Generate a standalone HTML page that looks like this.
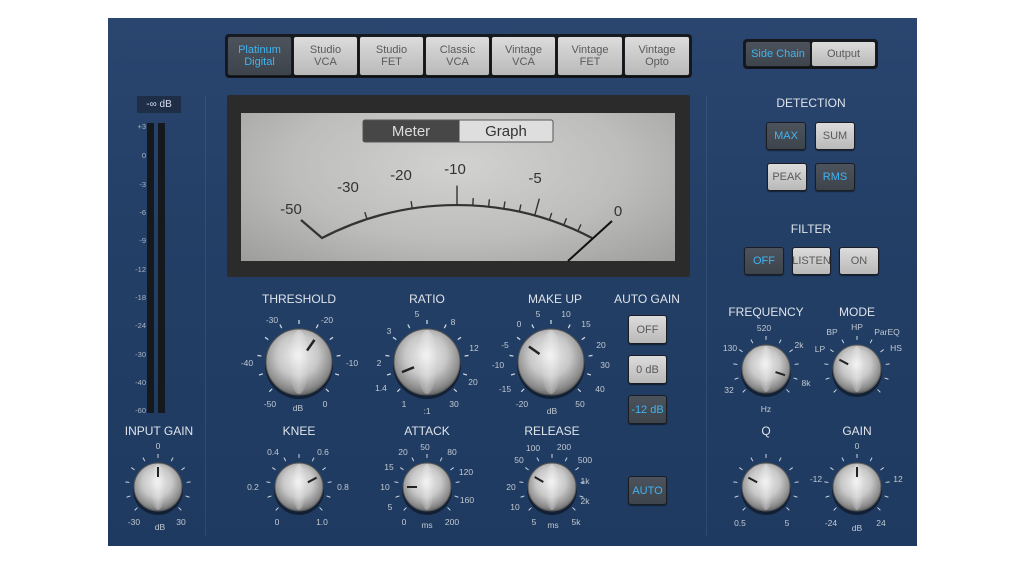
<!DOCTYPE html>
<html><head><meta charset="utf-8"><style>
*{margin:0;padding:0;box-sizing:border-box}
body{width:1024px;height:565px;background:#fff;position:relative;overflow:hidden;font-family:"Liberation Sans",sans-serif}
#panel{position:absolute;left:108px;top:18px;width:809px;height:528px;background:linear-gradient(180deg,#2a4670 0%,#233f66 40%,#1f3a60 100%)}
.b{position:absolute;border:1px solid #1a1d22;border-radius:3px;background:linear-gradient(#dcdcdc,#b9b9b9);color:#5a5a5a;font-size:11px;text-align:center;display:flex;align-items:center;justify-content:center;line-height:12px;box-shadow:0 1px 1px rgba(0,0,0,.5)}
.on{background:linear-gradient(#4c535c,#3e444c);color:#3fb4f2}
.vl{position:absolute;width:1px;background:rgba(255,255,255,.08)}
.kt{fill:none;stroke:#d0d7e0;stroke-width:4;stroke-dasharray:1.8 25.2 1.8 25.2 1.8 25.2 1.8 25.2 1.8 25.2 1.8 25.2 1.8 25.2 1.8 25.2 1.8 25.2 1.8 25.2 1.8 88.2}
text{font-family:"Liberation Sans",sans-serif}
.lb{fill:#dfe4ea;font-size:12px;text-anchor:middle}
.sc{fill:#c2c9d2;font-size:8.5px;text-anchor:middle}
</style></head><body>
<div id="panel"></div>
<div class="vl" style="left:205px;top:96px;height:440px"></div>
<div class="vl" style="left:706px;top:96px;height:440px"></div>
<div style="position:absolute;left:225px;top:34px;width:467px;height:44px;background:#16191e;border-radius:4px"></div>
<div class="b on" style="left:227px;top:36px;width:65px;height:40px">Platinum<br>Digital</div>
<div class="b" style="left:293px;top:36px;width:65px;height:40px">Studio<br>VCA</div>
<div class="b" style="left:359px;top:36px;width:65px;height:40px">Studio<br>FET</div>
<div class="b" style="left:425px;top:36px;width:65px;height:40px">Classic<br>VCA</div>
<div class="b" style="left:491px;top:36px;width:65px;height:40px">Vintage<br>VCA</div>
<div class="b" style="left:557px;top:36px;width:66px;height:40px">Vintage<br>FET</div>
<div class="b" style="left:624px;top:36px;width:66px;height:40px">Vintage<br>Opto</div>
<div style="position:absolute;left:743px;top:39px;width:135px;height:30px;background:#16191e;border-radius:4px"></div>
<div class="b on" style="left:745px;top:41px;width:66px;height:26px">Side Chain</div>
<div class="b" style="left:811px;top:41px;width:65px;height:26px">Output</div>
<div class="b on" style="left:766px;top:122px;width:40px;height:28px">MAX</div>
<div class="b" style="left:815px;top:122px;width:40px;height:28px">SUM</div>
<div class="b" style="left:767px;top:163px;width:40px;height:28px">PEAK</div>
<div class="b on" style="left:815px;top:163px;width:40px;height:28px">RMS</div>
<div class="b on" style="left:744px;top:247px;width:40px;height:28px">OFF</div>
<div class="b" style="left:792px;top:247px;width:39px;height:28px">LISTEN</div>
<div class="b" style="left:839px;top:247px;width:40px;height:28px">ON</div>
<div class="b" style="left:628px;top:315px;width:39px;height:29px">OFF</div>
<div class="b" style="left:628px;top:355px;width:39px;height:29px">0 dB</div>
<div class="b on" style="left:628px;top:395px;width:39px;height:29px">-12 dB</div>
<div class="b on" style="left:628px;top:476px;width:39px;height:29px">AUTO</div>
<div style="position:absolute;left:227px;top:95px;width:463px;height:182px;background:#2b2b2c;border-radius:2px"></div>
<div style="position:absolute;left:241px;top:113px;width:434px;height:148px;background:radial-gradient(ellipse at 50% 35%,#d2d2d0 0%,#bdbdbb 55%,#9d9d9b 100%)"></div>
<div style="position:absolute;left:137px;top:96px;width:44px;height:17px;background:#1d2e46;color:#dde;font-size:10px;text-align:center;line-height:17px">-∞ dB</div>
<div style="position:absolute;left:147px;top:123px;width:7px;height:290px;background:#15181c"></div>
<div style="position:absolute;left:158px;top:123px;width:7px;height:290px;background:#15181c"></div>
<svg width="1024" height="565" style="position:absolute;left:0;top:0">
<defs>
<radialGradient id="sil" cx="48%" cy="40%" r="62%"><stop offset="0" stop-color="#eeeeee"/><stop offset=".5" stop-color="#c8c8c8"/><stop offset=".85" stop-color="#8a8a8a"/><stop offset="1" stop-color="#5e5e5e"/></radialGradient>
<linearGradient id="sh" x1="0" y1="0" x2="1" y2="0"><stop offset="0" stop-color="#fff" stop-opacity="0"/><stop offset=".5" stop-color="#fff" stop-opacity=".3"/><stop offset="1" stop-color="#fff" stop-opacity="0"/></linearGradient>
</defs>
<rect x="363" y="120" width="190" height="22" rx="2" fill="#dedede" stroke="#555"/>
<rect x="363.5" y="120.5" width="96" height="21" fill="#474747"/>
<text x="411" y="136" font-size="15" fill="#ddd" text-anchor="middle">Meter</text>
<text x="506" y="136" font-size="15" fill="#333" text-anchor="middle">Graph</text>
<path d="M301 220 L322 238 A293 293 0 0 1 592 238" fill="none" stroke="#333" stroke-width="2.2"/>
<g stroke="#333" stroke-width="1.4" transform="translate(457,497.6)">
<line x1="0" y1="-293" x2="0" y2="-312"/>
<line x1="0" y1="-293" x2="0" y2="-310" transform="rotate(15.4)"/>
<line x1="0" y1="-293" x2="0" y2="-300" transform="rotate(-8.8)"/>
<line x1="0" y1="-293" x2="0" y2="-300" transform="rotate(-17.9)"/>
<line x1="0" y1="-293" x2="0" y2="-300" transform="rotate(3.1)"/>
<line x1="0" y1="-293" x2="0" y2="-300" transform="rotate(6.2)"/>
<line x1="0" y1="-293" x2="0" y2="-300" transform="rotate(9.2)"/>
<line x1="0" y1="-293" x2="0" y2="-300" transform="rotate(12.3)"/>
<line x1="0" y1="-293" x2="0" y2="-300" transform="rotate(18.4)"/>
<line x1="0" y1="-293" x2="0" y2="-300" transform="rotate(21.4)"/>
<line x1="0" y1="-293" x2="0" y2="-300" transform="rotate(24.4)"/>
</g>
<g font-size="15" fill="#333" text-anchor="middle">
<text x="291" y="214">-50</text><text x="348" y="192">-30</text><text x="401" y="180">-20</text><text x="455" y="174">-10</text><text x="535" y="183">-5</text><text x="618" y="216">0</text>
</g>
<line x1="568" y1="261" x2="612" y2="221" stroke="#111" stroke-width="2"/>
<g font-size="7.5" fill="#a9b4c4" text-anchor="end">
<text x="146" y="129">+3</text><text x="146" y="158">0</text><text x="146" y="187">-3</text><text x="146" y="215">-6</text><text x="146" y="243">-9</text><text x="146" y="272">-12</text><text x="146" y="300">-18</text><text x="146" y="328">-24</text><text x="146" y="357">-30</text><text x="146" y="385">-40</text><text x="146" y="413">-60</text>
</g>
<g>
<text class="lb" x="299" y="303">THRESHOLD</text><text class="lb" x="427" y="303">RATIO</text><text class="lb" x="555" y="303">MAKE UP</text><text class="lb" x="647" y="303">AUTO GAIN</text>
<text class="lb" x="299" y="435">KNEE</text><text class="lb" x="427" y="435">ATTACK</text><text class="lb" x="552" y="435">RELEASE</text><text class="lb" x="159" y="435">INPUT GAIN</text>
<text class="lb" x="811" y="107">DETECTION</text><text class="lb" x="811" y="233">FILTER</text>
<text class="lb" x="766" y="316">FREQUENCY</text><text class="lb" x="857" y="316">MODE</text>
<text class="lb" x="766" y="435">Q</text><text class="lb" x="857" y="435">GAIN</text>
</g>
<g>
<text class="sc" x="272" y="323">-30</text><text class="sc" x="327" y="323">-20</text><text class="sc" x="247" y="366">-40</text><text class="sc" x="352" y="366">-10</text><text class="sc" x="270" y="407">-50</text><text class="sc" x="298" y="411">dB</text><text class="sc" x="325" y="407">0</text>
<text class="sc" x="417" y="317">5</text><text class="sc" x="453" y="325">8</text><text class="sc" x="389" y="334">3</text><text class="sc" x="474" y="351">12</text><text class="sc" x="379" y="366">2</text><text class="sc" x="473" y="385">20</text><text class="sc" x="381" y="391">1.4</text><text class="sc" x="404" y="407">1</text><text class="sc" x="427" y="414">:1</text><text class="sc" x="454" y="407">30</text>
<text class="sc" x="538" y="317">5</text><text class="sc" x="566" y="317">10</text><text class="sc" x="519" y="327">0</text><text class="sc" x="586" y="327">15</text><text class="sc" x="505" y="348">-5</text><text class="sc" x="601" y="348">20</text><text class="sc" x="498" y="368">-10</text><text class="sc" x="605" y="368">30</text><text class="sc" x="505" y="392">-15</text><text class="sc" x="600" y="392">40</text><text class="sc" x="522" y="407">-20</text><text class="sc" x="552" y="414">dB</text><text class="sc" x="580" y="407">50</text>
<text class="sc" x="273" y="455">0.4</text><text class="sc" x="323" y="455">0.6</text><text class="sc" x="253" y="490">0.2</text><text class="sc" x="343" y="490">0.8</text><text class="sc" x="277" y="525">0</text><text class="sc" x="322" y="525">1.0</text>
<text class="sc" x="403" y="455">20</text><text class="sc" x="425" y="450">50</text><text class="sc" x="452" y="455">80</text><text class="sc" x="389" y="470">15</text><text class="sc" x="466" y="475">120</text><text class="sc" x="385" y="490">10</text><text class="sc" x="467" y="503">160</text><text class="sc" x="390" y="510">5</text><text class="sc" x="404" y="525">0</text><text class="sc" x="427" y="528">ms</text><text class="sc" x="452" y="525">200</text>
<text class="sc" x="533" y="451">100</text><text class="sc" x="564" y="450">200</text><text class="sc" x="519" y="463">50</text><text class="sc" x="585" y="463">500</text><text class="sc" x="511" y="490">20</text><text class="sc" x="585" y="484">1k</text><text class="sc" x="515" y="510">10</text><text class="sc" x="585" y="504">2k</text><text class="sc" x="534" y="525">5</text><text class="sc" x="553" y="528">ms</text><text class="sc" x="576" y="525">5k</text>
<text class="sc" x="158" y="449">0</text><text class="sc" x="134" y="525">-30</text><text class="sc" x="160" y="530">dB</text><text class="sc" x="181" y="525">30</text>
<text class="sc" x="764" y="331">520</text><text class="sc" x="730" y="351">130</text><text class="sc" x="799" y="348">2k</text><text class="sc" x="729" y="393">32</text><text class="sc" x="806" y="386">8k</text><text class="sc" x="766" y="412">Hz</text>
<text class="sc" x="832" y="335">BP</text><text class="sc" x="857" y="330">HP</text><text class="sc" x="887" y="335">ParEQ</text><text class="sc" x="820" y="352">LP</text><text class="sc" x="896" y="351">HS</text>
<text class="sc" x="857" y="449">0</text><text class="sc" x="816" y="482">-12</text><text class="sc" x="898" y="482">12</text><text class="sc" x="740" y="526">0.5</text><text class="sc" x="787" y="526">5</text><text class="sc" x="831" y="526">-24</text><text class="sc" x="857" y="531">dB</text><text class="sc" x="881" y="526">24</text>
</g>
<g transform="translate(299,362)"><circle class="kt" r="40" pathLength="360" transform="rotate(134.1)"/><circle r="34" cy="3" fill="rgba(0,0,0,.45)"/><circle r="33" fill="url(#sil)"/><ellipse rx="10" ry="32" fill="url(#sh)"/><circle r="33" fill="none" stroke="#555"/><line x1="0" y1="-14" x2="0" y2="-27" stroke="#222" stroke-width="2.5" transform="rotate(35)"/></g>
<g transform="translate(427,362)"><circle class="kt" r="40" pathLength="360" transform="rotate(134.1)"/><circle r="34" cy="3" fill="rgba(0,0,0,.45)"/><circle r="33" fill="url(#sil)"/><ellipse rx="10" ry="32" fill="url(#sh)"/><circle r="33" fill="none" stroke="#555"/><line x1="0" y1="-14" x2="0" y2="-27" stroke="#222" stroke-width="2.5" transform="rotate(-112)"/></g>
<g transform="translate(551,362)"><circle class="kt" r="40" pathLength="360" transform="rotate(134.1)"/><circle r="34" cy="3" fill="rgba(0,0,0,.45)"/><circle r="33" fill="url(#sil)"/><ellipse rx="10" ry="32" fill="url(#sh)"/><circle r="33" fill="none" stroke="#555"/><line x1="0" y1="-14" x2="0" y2="-27" stroke="#222" stroke-width="2.5" transform="rotate(-55)"/></g>
<g transform="translate(299,487)"><circle class="kt" r="31" pathLength="360" transform="rotate(134.1)"/><circle r="25" cy="3" fill="rgba(0,0,0,.45)"/><circle r="24" fill="url(#sil)"/><ellipse rx="7" ry="23" fill="url(#sh)"/><circle r="24" fill="none" stroke="#555"/><line x1="0" y1="-10" x2="0" y2="-20" stroke="#222" stroke-width="2" transform="rotate(62)"/></g>
<g transform="translate(427,487)"><circle class="kt" r="31" pathLength="360" transform="rotate(134.1)"/><circle r="25" cy="3" fill="rgba(0,0,0,.45)"/><circle r="24" fill="url(#sil)"/><ellipse rx="7" ry="23" fill="url(#sh)"/><circle r="24" fill="none" stroke="#555"/><line x1="0" y1="-10" x2="0" y2="-20" stroke="#222" stroke-width="2" transform="rotate(-90)"/></g>
<g transform="translate(552,487)"><circle class="kt" r="31" pathLength="360" transform="rotate(134.1)"/><circle r="25" cy="3" fill="rgba(0,0,0,.45)"/><circle r="24" fill="url(#sil)"/><ellipse rx="7" ry="23" fill="url(#sh)"/><circle r="24" fill="none" stroke="#555"/><line x1="0" y1="-10" x2="0" y2="-20" stroke="#222" stroke-width="2" transform="rotate(-60)"/></g>
<g transform="translate(158,487)"><circle class="kt" r="31" pathLength="360" transform="rotate(134.1)"/><circle r="25" cy="3" fill="rgba(0,0,0,.45)"/><circle r="24" fill="url(#sil)"/><ellipse rx="7" ry="23" fill="url(#sh)"/><circle r="24" fill="none" stroke="#555"/><line x1="0" y1="-10" x2="0" y2="-20" stroke="#222" stroke-width="2"/></g>
<g transform="translate(766,369)"><circle class="kt" r="31" pathLength="360" transform="rotate(134.1)"/><circle r="25" cy="3" fill="rgba(0,0,0,.45)"/><circle r="24" fill="url(#sil)"/><ellipse rx="7" ry="23" fill="url(#sh)"/><circle r="24" fill="none" stroke="#555"/><line x1="0" y1="-10" x2="0" y2="-20" stroke="#222" stroke-width="2" transform="rotate(108)"/></g>
<g transform="translate(857,369)"><circle class="kt" r="31" pathLength="360" transform="rotate(134.1)"/><circle r="25" cy="3" fill="rgba(0,0,0,.45)"/><circle r="24" fill="url(#sil)"/><ellipse rx="7" ry="23" fill="url(#sh)"/><circle r="24" fill="none" stroke="#555"/><line x1="0" y1="-10" x2="0" y2="-20" stroke="#222" stroke-width="2" transform="rotate(-62)"/></g>
<g transform="translate(766,487)"><circle class="kt" r="31" pathLength="360" transform="rotate(134.1)"/><circle r="25" cy="3" fill="rgba(0,0,0,.45)"/><circle r="24" fill="url(#sil)"/><ellipse rx="7" ry="23" fill="url(#sh)"/><circle r="24" fill="none" stroke="#555"/><line x1="0" y1="-10" x2="0" y2="-20" stroke="#222" stroke-width="2" transform="rotate(-62)"/></g>
<g transform="translate(857,487)"><circle class="kt" r="31" pathLength="360" transform="rotate(134.1)"/><circle r="25" cy="3" fill="rgba(0,0,0,.45)"/><circle r="24" fill="url(#sil)"/><ellipse rx="7" ry="23" fill="url(#sh)"/><circle r="24" fill="none" stroke="#555"/><line x1="0" y1="-10" x2="0" y2="-20" stroke="#222" stroke-width="2"/></g>
</svg>
</body></html>
